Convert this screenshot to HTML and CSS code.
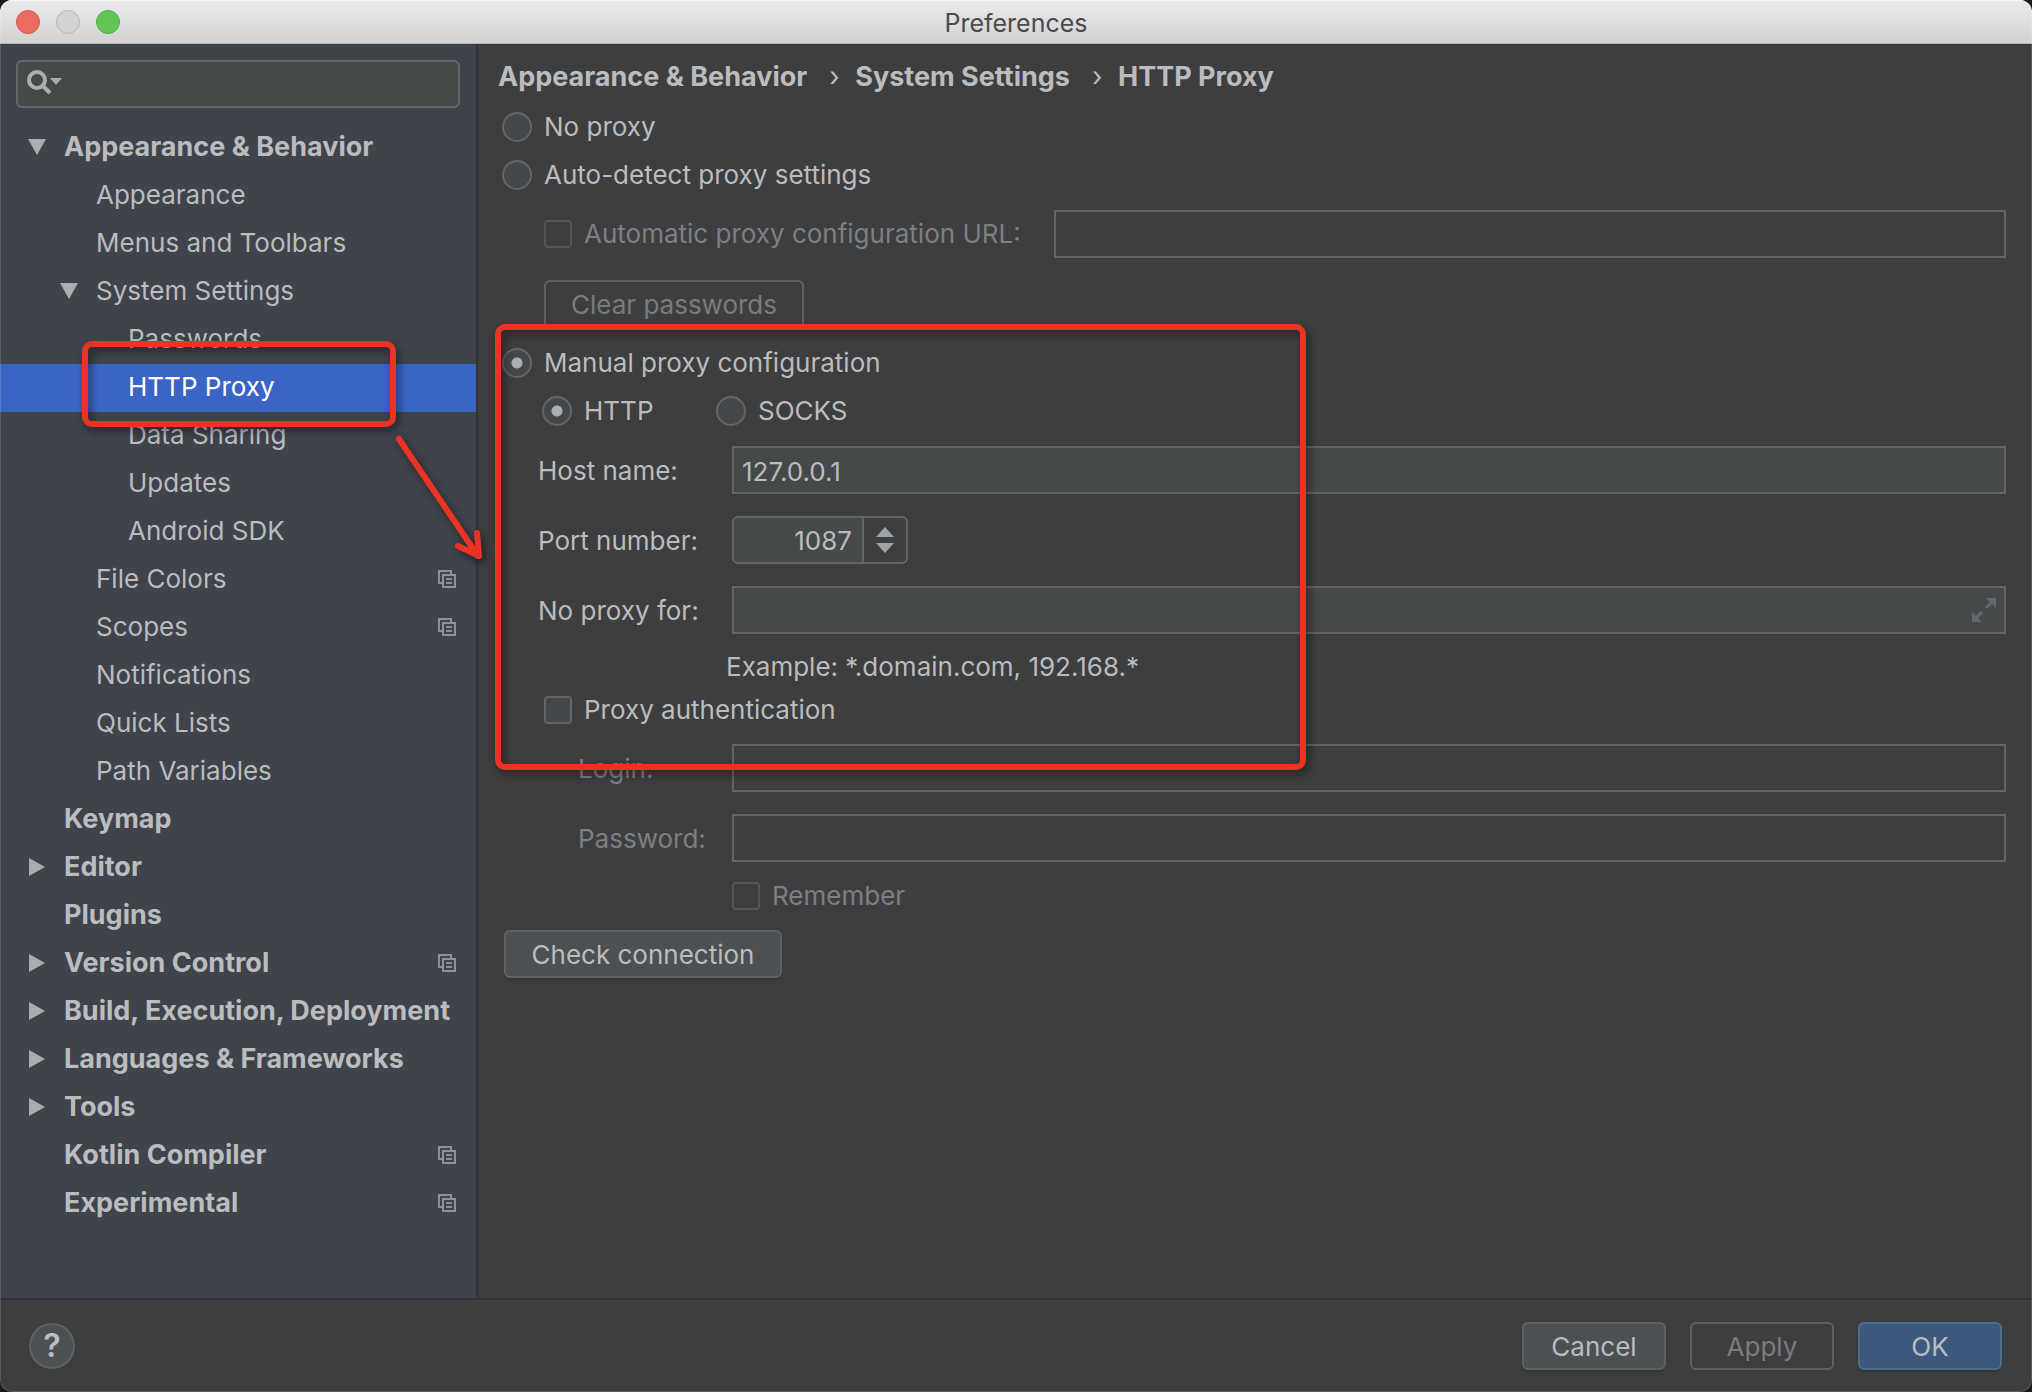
FILE: index.html
```html
<!DOCTYPE html>
<html lang="en">
<head>
<meta charset="utf-8">
<title>Preferences</title>
<link rel="stylesheet" href="styles.css">
</head>
<body>
<svg class="symbols" aria-hidden="true">
  <symbol id="down" viewBox="0 0 18 16"><path d="M0 0H18L9 16Z" fill="currentColor"/></symbol>
  <symbol id="right" viewBox="0 0 16 18"><path d="M0 0V18L16 9Z" fill="currentColor"/></symbol>
  <symbol id="copy" viewBox="0 0 18 18"><path d="M4 13H1V1H13V4M5 5H17V17H5ZM8 9H14M8 13H14" fill="none" stroke="currentColor" stroke-width="2"/></symbol>
</svg>
<div class="window">
  <header class="titlebar">
    <div class="lights">
      <button class="light close" aria-label="Close"></button>
      <button class="light minimize" aria-label="Minimize" disabled></button>
      <button class="light zoom" aria-label="Zoom"></button>
    </div>
    <h1 class="title">Preferences</h1>
  </header>

  <div class="content">
    <aside class="sidebar">
      <div class="search">
        <svg class="search-icon" width="36" height="26" viewBox="0 0 36 26" aria-hidden="true">
          <circle cx="10" cy="10" r="8" fill="none" stroke="currentColor" stroke-width="4"/>
          <path d="M15.500 15.500L23 23" stroke="currentColor" stroke-width="4"/>
          <path d="M23 8H35L29 15Z" fill="currentColor"/>
        </svg>
        <input class="search-input" type="text" aria-label="Search settings">
      </div>
      <nav class="tree" aria-label="Settings">
        <a class="node group" href="#"><svg class="arrow"><use href="#down"/></svg>Appearance &amp; Behavior</a>
        <a class="node level2" href="#">Appearance</a>
        <a class="node level2" href="#">Menus and Toolbars</a>
        <a class="node level2" href="#"><svg class="arrow"><use href="#down"/></svg>System Settings</a>
        <a class="node level3" href="#">Passwords</a>
        <a class="node level3 selected" href="#" aria-current="page">HTTP Proxy</a>
        <a class="node level3" href="#">Data Sharing</a>
        <a class="node level3" href="#">Updates</a>
        <a class="node level3" href="#">Android SDK</a>
        <a class="node level2" href="#">File Colors<svg class="copy"><use href="#copy"/></svg></a>
        <a class="node level2" href="#">Scopes<svg class="copy"><use href="#copy"/></svg></a>
        <a class="node level2" href="#">Notifications</a>
        <a class="node level2" href="#">Quick Lists</a>
        <a class="node level2" href="#">Path Variables</a>
        <a class="node group" href="#">Keymap</a>
        <a class="node group" href="#"><svg class="arrow"><use href="#right"/></svg>Editor</a>
        <a class="node group" href="#">Plugins</a>
        <a class="node group" href="#"><svg class="arrow"><use href="#right"/></svg>Version Control<svg class="copy"><use href="#copy"/></svg></a>
        <a class="node group" href="#"><svg class="arrow"><use href="#right"/></svg>Build, Execution, Deployment</a>
        <a class="node group" href="#"><svg class="arrow"><use href="#right"/></svg>Languages &amp; Frameworks</a>
        <a class="node group" href="#"><svg class="arrow"><use href="#right"/></svg>Tools</a>
        <a class="node group" href="#">Kotlin Compiler<svg class="copy"><use href="#copy"/></svg></a>
        <a class="node group" href="#">Experimental<svg class="copy"><use href="#copy"/></svg></a>
      </nav>
    </aside>

    <main class="panel">
      <div class="crumbs">
        <span>Appearance &amp; Behavior</span><span class="sep">›</span><span>System Settings</span><span class="sep">›</span><span>HTTP Proxy</span>
      </div>
      <form class="form">
        <label class="option"><input class="radio" type="radio" name="mode">No proxy</label>
        <label class="option"><input class="radio" type="radio" name="mode">Auto-detect proxy settings</label>
        <div class="row url-row">
          <label class="option disabled"><input class="check" type="checkbox" disabled>Automatic proxy configuration URL:</label>
          <input class="field" type="text" aria-label="Automatic proxy configuration URL" disabled>
        </div>
        <button class="button clear" type="button" disabled>Clear passwords</button>
        <label class="option manual"><input class="radio" type="radio" name="mode" checked>Manual proxy configuration</label>
        <div class="kinds">
          <label class="option kind"><input class="radio" type="radio" name="kind" checked>HTTP</label>
          <label class="option"><input class="radio" type="radio" name="kind">SOCKS</label>
        </div>
        <div class="grid">
          <label class="caption" for="host">Host name:</label>
          <input class="field" id="host" type="text" value="127.0.0.1">
          <label class="caption" for="port">Port number:</label>
          <div class="spinner">
            <input class="spinner-input" id="port" type="number" value="1087">
            <div class="steps">
              <button class="step" type="button" aria-label="Increase"><svg width="18" height="10" viewBox="0 0 18 10"><path d="M0 10H18L9 0Z" fill="currentColor"/></svg></button>
              <button class="step" type="button" aria-label="Decrease"><svg width="18" height="10" viewBox="0 0 18 10"><path d="M0 0H18L9 10Z" fill="currentColor"/></svg></button>
            </div>
          </div>
          <label class="caption" for="bypass">No proxy for:</label>
          <div class="field expandable">
            <input class="bare" id="bypass" type="text">
            <button class="expand" type="button" aria-label="Expand"><svg width="24" height="24" viewBox="0 0 24 24"><path d="M14 0H24V10ZM0 14V24H10Z" fill="currentColor"/><path d="M14 10L21 3M10 14L3 21" stroke="currentColor" stroke-width="3"/></svg></button>
          </div>
        </div>
        <p class="example">Example: *.domain.com, 192.168.*</p>
        <label class="option auth"><input class="check" type="checkbox">Proxy authentication</label>
        <div class="grid login">
          <label class="caption disabled" for="login">Login:</label>
          <input class="field" id="login" type="text" disabled>
          <label class="caption disabled" for="password">Password:</label>
          <input class="field" id="password" type="password" disabled>
        </div>
        <label class="option disabled remember"><input class="check" type="checkbox" disabled>Remember</label>
        <button class="button test" type="button">Check connection</button>
      </form>
    </main>
  </div>

  <footer class="footer">
    <button class="help" aria-label="Help">?</button>
    <div class="actions">
      <button class="button">Cancel</button>
      <button class="button" disabled>Apply</button>
      <button class="button primary">OK</button>
    </div>
  </footer>

  <svg class="notes" aria-hidden="true">
    <g fill="none" stroke="#ea3323" stroke-width="6" stroke-linecap="round" stroke-linejoin="round">
      <rect x="85" y="344" width="308" height="80" rx="7"/>
      <rect x="498" y="327" width="805" height="440" rx="7"/>
      <path d="M399 439L478 556M477 533L479 556L458 546"/>
    </g>
  </svg>
</div>
</body>
</html>
```

FILE: styles.css
```css
* { box-sizing: border-box; }

body {
  margin: 0;
  background: #1c1c1e;
  color: #bbbcbd;
  font: 26px/32px Inter, "Liberation Sans", sans-serif;
}

button, input { font: inherit; color: inherit; margin: 0; }
button { padding: 0; border: 0; background: none; }
.symbols { position: absolute; width: 0; height: 0; }

.window {
  position: relative;
  display: flex;
  flex-direction: column;
  min-height: 100vh;
  border-radius: 12px;
  overflow: hidden;
  background: #3d3e40;
}
.window::after {
  content: "";
  position: absolute;
  inset: 0;
  border-radius: 12px;
  box-shadow: inset 0 0 0 1px rgba(255, 255, 255, .14);
  pointer-events: none;
}

.titlebar {
  display: grid;
  grid-template-columns: 1fr auto 1fr;
  align-items: center;
  height: 44px;
  padding: 0 16px;
  background: linear-gradient(#ebebeb, #d2d2d2);
  border-bottom: 1px solid #b4b6b6;
  box-shadow: inset 0 1px #f8f8f8;
}
.lights { display: flex; gap: 16px; }
.light { width: 24px; height: 24px; border: 1px solid; border-radius: 50%; }
.close { background: #ed6b60; border-color: #d6544a; }
.minimize { background: #d2d2d2; border-color: #b4b4b4; }
.zoom { background: #62c656; border-color: #52ac46; }
.title { margin: 0; padding-top: 2px; font-size: 25px; font-weight: 400; color: #4a4a4a; }

.content { flex: 1; display: flex; }

.sidebar {
  flex: none;
  width: 478px;
  padding-top: 16px;
  background: #3f434c;
  border-right: 2px solid #323437;
}
.search {
  display: flex;
  align-items: center;
  height: 48px;
  margin: 0 16px 16px;
  padding: 0 9px 2px;
  background: #45494a;
  border: 2px solid #636566;
  border-radius: 6px;
}
.search-icon { flex: none; color: #adadad; }
.search-input { flex: 1; min-width: 0; border: 0; outline: 0; background: none; }

.node {
  display: flex;
  align-items: center;
  height: 48px;
  padding: 0 20px 2px 64px;
  color: inherit;
  text-decoration: none;
  white-space: nowrap;
}
.group { font-size: 27px; font-weight: 700; }
.level2 { padding-left: 96px; }
.level3 { padding-left: 128px; }
.selected { background: #3a65c4; color: #fff; }
.arrow { flex: none; width: 18px; height: 18px; margin: 0 18px 0 -36px; color: #adadad; }
.copy { flex: none; width: 18px; height: 18px; margin-left: auto; color: #8b919b; }

.panel { flex: 1; min-width: 0; padding: 17px 26px 16px 20px; }
.crumbs { display: flex; font-size: 27px; font-weight: 700; }
.sep { width: 48px; padding-left: 22px; font-weight: 400; }

.form { display: flex; flex-direction: column; align-items: flex-start; padding: 10px 0 0 4px; }
.option { display: flex; align-items: center; gap: 12px; height: 48px; white-space: nowrap; }
.disabled { color: #7e7f80; }

.radio, .check {
  appearance: none;
  flex: none;
  background: #43494b;
  border: 2px solid #636566;
}
.radio { width: 30px; height: 30px; border-radius: 50%; }
.radio:checked { background: radial-gradient(circle, #adadad 5px, #43494b 6px); }
.check { width: 28px; height: 28px; border-radius: 4px; }
.check:disabled { background: none; border-color: #535557; }

.field {
  width: 100%;
  height: 48px;
  padding: 2px 8px 0;
  background: #45494a;
  border: 2px solid #636566;
  border-radius: 0;
  outline: 0;
}
.field:disabled { background: none; }

.row { display: flex; width: 100%; padding-left: 42px; }
.url-row { margin: 11px 0 22px; gap: 33px; }
.url-row .field { flex: 1; min-width: 0; }

.button {
  height: 48px;
  min-width: 144px;
  padding: 2px 16px 0;
  background: #4c5053;
  border: 2px solid #5e6162;
  border-radius: 6px;
  box-shadow: 0 2px 2px rgba(0, 0, 0, .15);
  white-space: nowrap;
}
.button:disabled { background: none; color: #7a7b7c; box-shadow: none; }
.primary { background: #3c587f; border-color: #4d6f8b; }

.clear { width: 260px; margin: 0 0 11px 42px; }
.kinds { display: flex; padding-left: 40px; margin-bottom: 11px; }
.kind { width: 174px; }

.grid {
  display: grid;
  grid-template-columns: 194px 1fr;
  align-items: center;
  row-gap: 22px;
  width: 100%;
  padding-left: 36px;
}
.login { grid-template-columns: 154px 1fr; padding-left: 76px; margin: 14px 0 10px; }
.caption { padding-top: 2px; }

.spinner {
  display: flex;
  width: 176px;
  height: 48px;
  border: 2px solid #636566;
  border-radius: 6px;
  overflow: hidden;
}
.spinner-input {
  appearance: textfield;
  width: 130px;
  padding: 2px 10px 0;
  background: #45494a;
  border: 0;
  border-right: 2px solid #636566;
  outline: 0;
  text-align: right;
}
.spinner-input::-webkit-inner-spin-button { appearance: none; }
.steps { flex: 1; display: flex; flex-direction: column; justify-content: center; gap: 6px; color: #a0a4a8; }
.step { display: flex; justify-content: center; }

.expandable { display: flex; align-items: center; padding-top: 0; }
.bare { flex: 1; min-width: 0; border: 0; outline: 0; background: none; }
.expand { display: flex; color: #64696c; }

.example { margin: 17px 0 7px 224px; }
.auth { height: 40px; margin-left: 42px; }
.remember { height: 48px; margin-left: 230px; }
.test { width: 278px; margin: 10px 0 0 2px; }

.footer {
  display: flex;
  align-items: center;
  justify-content: space-between;
  height: 94px;
  padding: 0 30px 0 29px;
  border-top: 2px solid #323335;
}
.actions { display: flex; gap: 24px; }
.help {
  width: 46px;
  height: 46px;
  background: #4c5053;
  border: 2px solid #5e6162;
  border-radius: 50%;
  font-size: 32px;
  font-weight: 600;
}

.notes {
  position: absolute;
  inset: 0;
  width: 100%;
  height: 100%;
  pointer-events: none;
  filter: drop-shadow(3px 4px 4px rgba(0, 0, 0, .5));
}
```
